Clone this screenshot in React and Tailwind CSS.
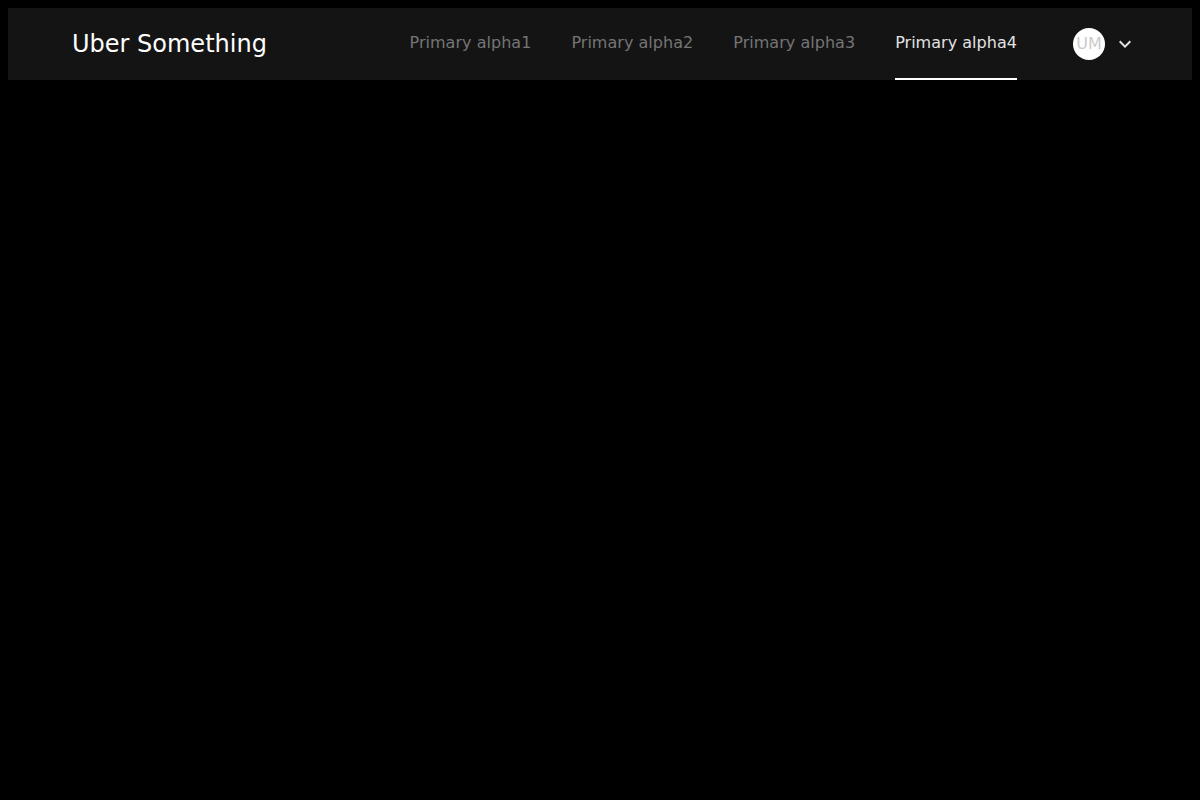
export default function App() {
  const items = ["Primary alpha1", "Primary alpha2", "Primary alpha3", "Primary alpha4"];
  return (
    <div className="min-h-[800px] bg-black p-2" style={{ fontFamily: '"DejaVu Sans", sans-serif' }}>
      <header className="flex h-[72px] items-center bg-[#141414] pl-16 pr-[55px]">
        <div className="text-[24px] text-white">Uber Something</div>
        <nav className="ml-auto flex h-full items-stretch gap-10">
          {items.map((item, i) => (
            <div
              key={item}
              className={
                i === 3
                  ? "flex items-center border-b-2 border-white text-[16px] tracking-[0.03px] text-[#e2e2e2]"
                  : "flex items-center border-b-2 border-transparent text-[16px] tracking-[0.03px] text-[#757575]"
              }
            >
              <span className="-mt-[1px]">{item}</span>
            </div>
          ))}
        </nav>
        <div className="ml-14 flex items-center gap-2">
          <div className="flex h-8 w-8 items-center justify-center rounded-full bg-white text-[16px] text-[#cbcbcb]">
            UM
          </div>
          <svg width="24" height="24" viewBox="0 0 24 24" fill="#e2e2e2">
            <path d="M16.59 8.59L12 13.17 7.41 8.59 6 10l6 6 6-6z" />
          </svg>
        </div>
      </header>
    </div>
  );
}
